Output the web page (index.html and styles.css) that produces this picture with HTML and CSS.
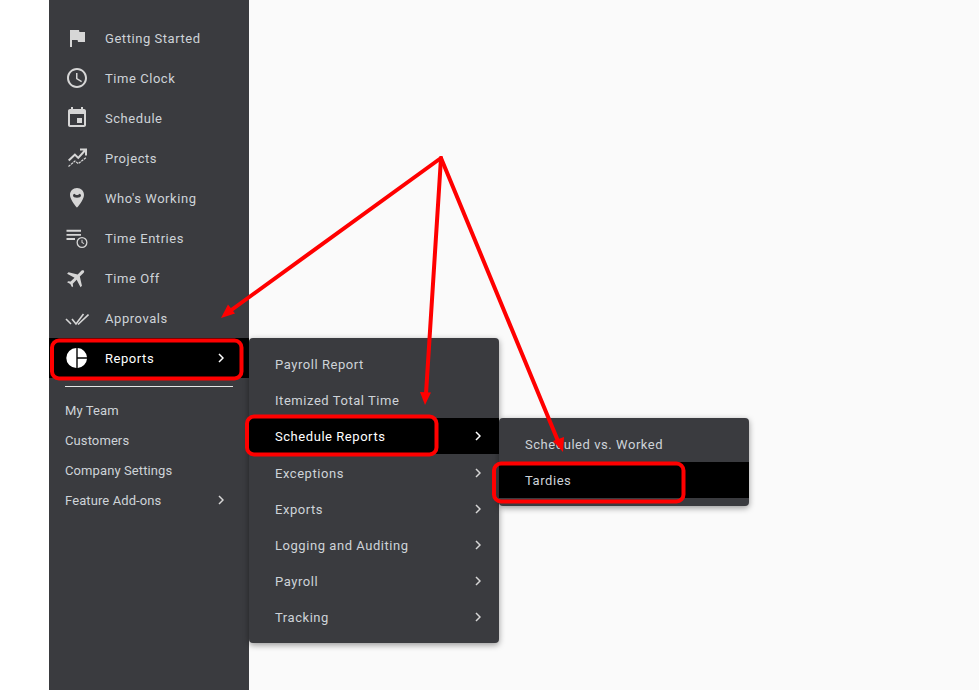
FILE: index.html
```html
<!DOCTYPE html>
<html lang="en">
<head>
<meta charset="utf-8">
<title>Reports menu</title>
<link rel="stylesheet" href="styles.css">
</head>
<body>
<div class="app">
  <div class="gutter"></div>
  <nav class="sidebar">
    <ul class="nav">
      <li class="nav-item"><span class="nav-icon"><svg viewBox="0 0 24 24"><path d="M14.4 6L14 4H5v17h2v-7h5.6l.4 2h7V6z"/></svg></span>Getting Started</li>
      <li class="nav-item"><span class="nav-icon"><svg viewBox="0 0 24 24"><path d="M11.99 2C6.47 2 2 6.48 2 12s4.47 10 9.99 10C17.52 22 22 17.52 22 12S17.52 2 11.99 2zM12 20c-4.42 0-8-3.58-8-8s3.58-8 8-8 8 3.58 8 8-3.58 8-8 8z"/><path d="M12.5 7H11v6l5.25 3.15.75-1.23-4.5-2.67z"/></svg></span>Time Clock</li>
      <li class="nav-item"><span class="nav-icon"><svg viewBox="0 0 24 24"><path d="M17 12h-5v5h5v-5zM16 1v2H8V1H6v2H5c-1.11 0-1.99.9-1.99 2L3 19c0 1.1.89 2 2 2h14c1.1 0 2-.9 2-2V5c0-1.1-.9-2-2-2h-1V1h-2zm3 18H5V8h14v11z"/></svg></span>Schedule</li>
      <li class="nav-item"><span class="nav-icon"><svg viewBox="0 0 24 24"><path d="M15 2.500h7v7h-2V6l-6.700 7.300-3.400-3.300-5.500 5.200L3 13.800l6.900-6.600 3.300 3.200L18.500 4.500H15z"/><path class="thin dashed" d="M3.500 20.500L10 15l3.300 2.600 7.700-6"/></svg></span>Projects</li>
      <li class="nav-item"><span class="nav-icon"><svg viewBox="0 0 24 24"><path fill-rule="evenodd" d="M12 2C7.900 2 5 5.100 5 9c0 5 7 12.700 7 12.700S19 14 19 9c0-3.900-2.900-7-7-7zM8 9.800c0-1.200.8-2 1.500-2 .7 1 1.500 1.200 2.500 1.200s1.800-.2 2.500-1.200c.7 0 1.500.8 1.500 2 0 1-1.800 2-4 2s-4-1-4-2z"/></svg></span>Who's Working</li>
      <li class="nav-item"><span class="nav-icon"><svg viewBox="0 0 24 24"><path d="M1.500 3.800h14.500v1.900H1.500zM1.500 7.900h14.500v1.900H1.500zM1.500 12.100h8.500V14H1.500z"/><path fill-rule="evenodd" d="M17 11a5.500 5.500 0 1 0 0 11 5.500 5.500 0 0 0 0-11zm0 1.300a4.200 4.200 0 1 1 0 8.400 4.200 4.200 0 0 1 0-8.400z"/><path d="M16.500 13.800h1v2.500l1.800 1-.5.8-2.300-1.300z"/></svg></span>Time Entries</li>
      <li class="nav-item"><span class="nav-icon"><svg viewBox="0 0 24 24"><path transform="rotate(45 12 12)" d="M21 16v-2l-8-5V3.500c0-.83-.67-1.500-1.500-1.500S10 2.670 10 3.500V9l-8 5v2l8-2.500V19l-2 1.500V22l3.500-1 3.500 1v-1.500L13 19v-5.500l8 2.500z"/></svg></span>Time Off</li>
      <li class="nav-item"><span class="nav-icon"><svg viewBox="0 0 24 24"><path class="check" d="M1 13l5 5M7 13l4 5 7.500-10M13 18.500L23.500 8.500"/></svg></span>Approvals</li>
      <li class="nav-item is-active"><span class="nav-icon"><svg viewBox="0 0 24 24"><path d="M11.300 2A10 10 0 0 0 11.300 22zM12.700 2A10 10 0 0 1 22 11.300H12.700zM12.700 12.700H22A10 10 0 0 1 12.700 22z"/></svg></span>Reports<svg class="chev" viewBox="0 0 6 10"><path d="M1 1l4 4-4 4"/></svg>
        <ul class="menu menu-reports">
          <li class="menu-item">Payroll Report</li>
          <li class="menu-item">Itemized Total Time</li>
          <li class="menu-item is-active is-open">Schedule Reports<svg class="chev" viewBox="0 0 6 10"><path d="M1 1l4 4-4 4"/></svg>
            <ul class="menu menu-schedule">
              <li class="menu-item">Scheduled vs. Worked</li>
              <li class="menu-item is-active is-plain">Tardies</li>
            </ul>
          </li>
          <li class="menu-item">Exceptions<svg class="chev" viewBox="0 0 6 10"><path d="M1 1l4 4-4 4"/></svg></li>
          <li class="menu-item">Exports<svg class="chev" viewBox="0 0 6 10"><path d="M1 1l4 4-4 4"/></svg></li>
          <li class="menu-item">Logging and Auditing<svg class="chev" viewBox="0 0 6 10"><path d="M1 1l4 4-4 4"/></svg></li>
          <li class="menu-item">Payroll<svg class="chev" viewBox="0 0 6 10"><path d="M1 1l4 4-4 4"/></svg></li>
          <li class="menu-item">Tracking<svg class="chev" viewBox="0 0 6 10"><path d="M1 1l4 4-4 4"/></svg></li>
        </ul>
      </li>
    </ul>
    <div class="divider"></div>
    <ul class="subnav">
      <li class="subnav-item">My Team</li>
      <li class="subnav-item">Customers</li>
      <li class="subnav-item">Company Settings</li>
      <li class="subnav-item">Feature Add-ons<svg class="chev" viewBox="0 0 6 10"><path d="M1 1l4 4-4 4"/></svg></li>
    </ul>
  </nav>
  <main class="content"></main>
</div>
<svg class="markup" viewBox="0 0 979 690" width="979" height="690" aria-hidden="true">
  <g class="markup-box">
    <rect x="52" y="340.500" width="189.500" height="38" rx="7"/>
    <rect x="247" y="416.500" width="189.500" height="38" rx="7"/>
    <rect x="494" y="463.500" width="189.500" height="38" rx="7"/>
  </g>
  <g class="markup-line">
    <path d="M441 158L230 311"/>
    <path d="M441 158L426 394"/>
    <path d="M441 158L558 441"/>
  </g>
  <g class="markup-head">
    <path d="M221 318L235 313.500 228 304.500z"/>
    <path d="M425 405L420 392 431 392.500z"/>
    <path d="M563 452L553 441 564 437z"/>
  </g>
</svg>
</body>
</html>
```
FILE: styles.css
```css
* { box-sizing: border-box; }
html, body { margin: 0; padding: 0; height: 100%; }
body {
  position: relative;
  overflow: hidden;
  background: #fff;
  font-family: Roboto, "Liberation Sans", sans-serif;
  font-size: 13px;
  letter-spacing: 0.55px;
  color: #ced3d8;
}
ul { list-style: none; margin: 0; padding: 0; }
.app { display: flex; height: 690px; }
.gutter { width: 49px; background: #fff; }
.sidebar { width: 200px; background: #3a3b3f; padding-top: 18px; }
.content { flex: 1; background: #fafafa; }

.nav-item {
  position: relative;
  display: flex;
  align-items: center;
  height: 40px;
  padding: 0 25px 0 16px;
}
.nav-icon { width: 24px; height: 24px; margin-right: 16px; }
.nav-icon svg { display: block; width: 24px; height: 24px; fill: #d6d6d6; }
.thin { fill: none !important; stroke: #d6d6d6; stroke-width: 1.2; }
.dashed { stroke-dasharray: 2.5 0.8; }
.check { fill: none !important; stroke: #d6d6d6; stroke-width: 1.6; }
.nav-item.is-active { background: #000; color: #fff; }
.nav-item.is-active > .nav-icon svg { fill: #fff; }

.chev {
  width: 6px;
  height: 10px;
  margin-left: auto;
  flex: none;
  fill: none;
  stroke: #d6d6d6;
  stroke-width: 1.5;
}
.is-active > .chev { stroke: #fff; }

.divider { height: 1px; margin: 8px 16px 8px; background: #e6e6e6; }
.subnav-item {
  display: flex;
  align-items: center;
  height: 30px;
  padding: 0 25px 0 16px;
  letter-spacing: 0.1px;
}

.menu {
  position: absolute;
  width: 250px;
  padding: 8px 0;
  background: #3a3b3f;
  border-radius: 4px;
  box-shadow: 0 2px 6px rgba(0, 0, 0, 0.4);
  color: #ced3d8;
  z-index: 2;
  letter-spacing: 0.55px;
}
.menu-reports { left: 100%; top: 0; height: 305px; }
.menu-schedule { left: 100%; top: 0; height: 88px; }
.menu-item {
  position: relative;
  display: flex;
  align-items: center;
  height: 36px;
  padding: 0 18px 0 26px;
}
.menu-item.is-open { margin-bottom: 1px; }
.menu-item.is-active { background: #000; color: #fff; }
.menu-item.is-plain { color: #ced3d8; }

.markup { position: absolute; left: 0; top: 0; z-index: 5; pointer-events: none; }
.markup-box rect { fill: none; stroke: #f00; stroke-width: 4; }
.markup-line path { fill: none; stroke: #f00; stroke-width: 4; stroke-linecap: round; }
.markup-head path { fill: #f00; }
```
